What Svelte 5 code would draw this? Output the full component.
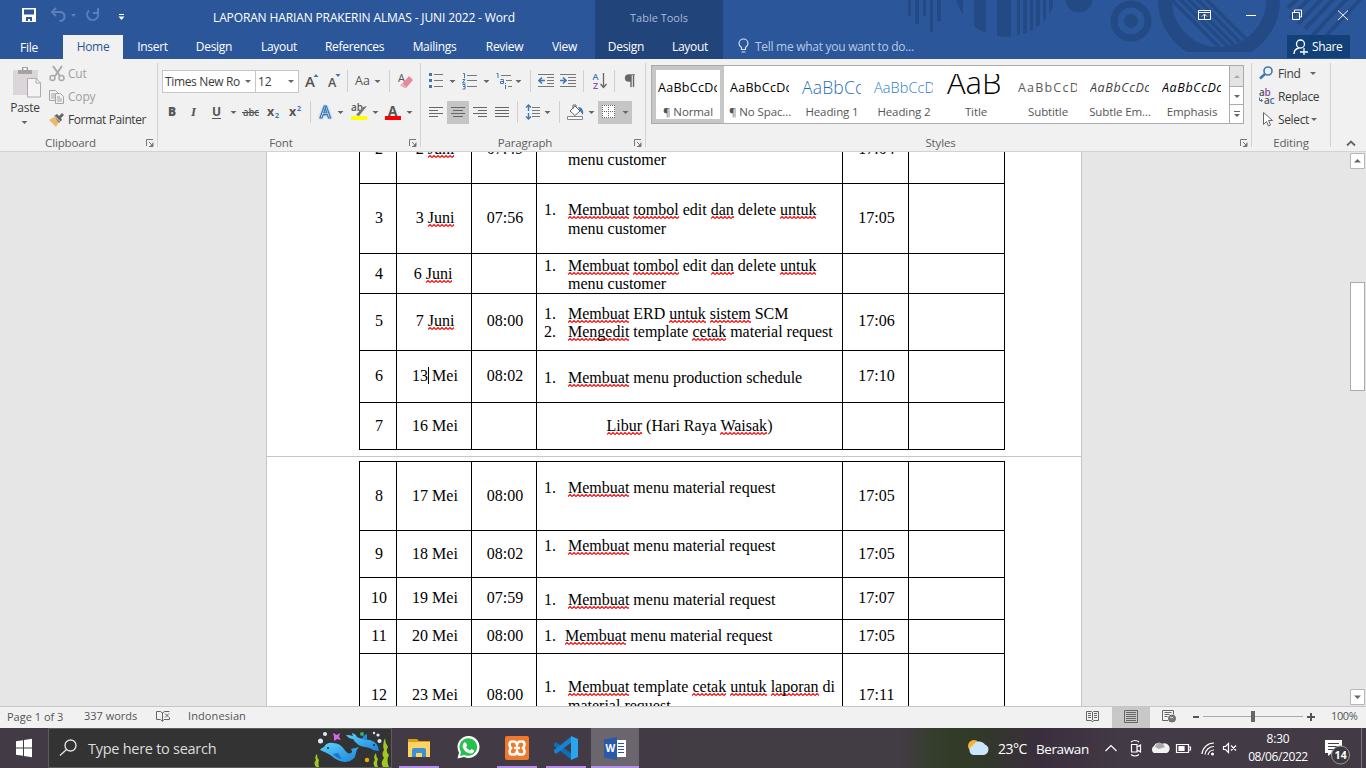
<script>
  const rows1 = [
    { h: 32, no: '2', date: '2 ~Juni~', t: '07:49', out: '17:04', mid: -3, lines: ['menu customer'], top: -1, cont: true },
    { h: 70, no: '3', date: '3 ~Juni~', t: '07:56', out: '17:05', mid: 34, lines: ['~Membuat~ ~tombol~ edit ~dan~ delete ~untuk~', 'menu customer'], top: 16, lead: 19 },
    { h: 40, no: '4', date: '6 ~Juni~', t: '', out: '', mid: 20, shift: true, lines: ['~Membuat~ ~tombol~ edit ~dan~ delete ~untuk~', 'menu customer'], top: 3 },
    { h: 57, no: '5', date: '7 ~Juni~', t: '08:00', out: '17:06', mid: 27, lines: ['~Membuat~ ERD ~untuk~ ~sistem~ SCM', '~Mengedit~ template ~cetak~ material request'], top: 11, multi: true },
    { h: 52, no: '6', date: '13| Mei', t: '08:02', out: '17:10', mid: 25, lines: ['~Membuat~ menu production schedule'], top: 18 },
    { h: 47, no: '7', date: '16 Mei', t: '', out: '', mid: 23, lines: ['~Libur~ (Hari Raya ~Waisak~)'], top: 14, holiday: true }
  ];
  const rows2 = [
    { h: 69, no: '8', date: '17 Mei', t: '08:00', out: '17:05', mid: 34, lines: ['~Membuat~ menu material request'], top: 17 },
    { h: 47, no: '9', date: '18 Mei', t: '08:02', out: '17:05', mid: 23, lines: ['~Membuat~ menu material request'], top: 6 },
    { h: 42, no: '10', date: '19 Mei', t: '07:59', out: '17:07', mid: 20, lines: ['~Membuat~ menu material request'], top: 13 },
    { h: 34, no: '11', date: '20 Mei', t: '08:00', out: '17:05', mid: 16, lines: ['~Membuat~ menu material request'], top: 7, tight: true },
    { h: 70, no: '12', date: '23 Mei', t: '08:00', out: '17:11', mid: 41, lines: ['~Membuat~ template ~cetak~ ~untuk~ ~laporan~ di', 'material request'], top: 23, lead: 19 }
  ];
  const tabs = [['Insert', 59], ['Design', 64], ['Layout', 66], ['References', 85], ['Mailings', 75], ['Review', 65], ['View', 55]];
  const styles = [
    ['AaBbCcDc', '¶ Normal', 'plain'], ['AaBbCcDc', '¶ No Spac...', 'plain'], ['AaBbCc', 'Heading 1', 'h1s'], ['AaBbCcD', 'Heading 2', 'h2s'],
    ['AaB', 'Title', 'title'], ['AaBbCcD', 'Subtitle', 'sub'], ['AaBbCcDc', 'Subtle Em...', 'subem'], ['AaBbCcDc', 'Emphasis', 'em']
  ];
  const parts = (s) => s.split('~').map((text, i) => ({ text, bad: i % 2 === 1 }));
</script>

{#snippet arrow(x, y)}<path d="M{x - 3} {y - 1}h6l-3 3z" fill="#666" />{/snippet}
{#snippet marked(s)}{#each parts(s) as p}{#if p.bad}<span class="bad">{p.text}</span>{:else if p.text.includes('|')}{p.text.split('|')[0]}<span class="caret"></span>{p.text.split('|')[1]}{:else}{p.text}{/if}{/each}{/snippet}
{#snippet launcher()}<svg width="16" height="16" viewBox="0 0 16 16"><path d="M5.500 11V4.500H12M8 7l3 3M12 7.500v4H8" fill="none" stroke="#777" /><path d="M12 8v4H8z" fill="#777" /></svg>{/snippet}
{#snippet row(r)}
  <div class="row" style:height="{r.h}px">
    <div class="c" style:padding-top="{Math.max(0, r.mid - 9)}px" style:margin-top="{Math.min(0, r.mid - 9)}px">{r.no}</div>
    <div class="c" style:padding-top="{Math.max(0, r.mid - 9)}px" style:margin-top="{Math.min(0, r.mid - 9)}px" style:padding-right="{r.shift ? 4 : 0}px">{@render marked(r.date)}</div>
    <div class="c" style:padding-top="{Math.max(0, r.mid - 9)}px" style:margin-top="{Math.min(0, r.mid - 9)}px">{r.t}</div>
    <div class="d" class:holiday={r.holiday} class:tight={r.tight} style:padding-top="{Math.max(0, r.top)}px" style:margin-top="{Math.min(0, r.top)}px" style:line-height="{r.lead ?? 18.4}px">
      {#each r.lines as l, i}
        <div class="line"><span>{#if !r.holiday && !r.cont && (i === 0 || r.multi)}{i + 1}.{/if}</span><span>{@render marked(l)}</span></div>
      {/each}
    </div>
    <div class="c" style:padding-top="{Math.max(0, r.mid - 9)}px" style:margin-top="{Math.min(0, r.mid - 9)}px">{r.out}</div>
    <div class="c last"></div>
  </div>
{/snippet}

<div class="app">
  <header>
    <svg class="art" width="466" height="59" viewBox="900 0 466 59" fill="#234a85">
      <clipPath id="disk"><circle cx="1006" cy="-15" r="52" /></clipPath>
      <clipPath id="ring"><circle cx="1219" cy="0" r="47" /></clipPath>
      <clipPath id="flat"><rect x="1150" y="0" width="140" height="52" /></clipPath>
      <path d="M908 0h3v16h-3zM915 0h4v24h-4zM923 0h3v16h-3zM930 0h3v32h-3zM937 0h4v21h-4z" />
      <path clip-path="url(#disk)" d="M954 0h9v40h-9zM974 0h12v40h-12zM997 0h14v40h-14zM1017 0h3v40h-3zM1023 0h4v40h-4zM1030 0h3v40h-3zM1036 0h4v40h-4zM1043 0h3v40h-3zM1049 0h4v40h-4zM1055 0h3v40h-3z" />
      <circle cx="1079" cy="-1" r="13.500" />
      <circle cx="1131" cy="21" r="17" fill="none" stroke="#234a85" stroke-width="7" />
      <circle cx="1131" cy="21" r="7" />
      <circle clip-path="url(#flat)" cx="1219" cy="0" r="54" fill="none" stroke="#234a85" stroke-width="14" />
      <g clip-path="url(#ring)" stroke="#234a85" stroke-width="3.500"><path d="M1160-12l75 75M1168-13l75 75M1177-12l75 75M1186-12l75 75M1195-12l75 75" /></g>
      <g stroke="#234a85" stroke-width="4"><path d="M1306-10l-18 18M1318-10l-28 28M1330-10l-32 34M1342-10l-37 39M1355-10l-43 46M1367-8l-52 56" /></g>
    </svg>
    <div class="titlebar">
      <svg width="213" height="35" viewBox="0 0 213 35" fill="none" stroke="#fff">
        <path d="M22 8h14v14H22z" fill="#fff" stroke="none" /><path d="M24 9.500h10v5H24zM26 17h6v4h-2v-2h-2v2h-2z" fill="#2b579a" stroke="none" />
        <path d="M56 8l-4 4 4 4M52.500 12h7q5 0 5 4.500t-5 4.500" stroke="#5b7fb8" stroke-width="2" /><path d="M71 14h5l-2.500 3z" fill="#5b7fb8" stroke="none" />
        <path d="M89 10.500A5.500 5.500 0 1 0 97.500 12M98 8v5h-5" stroke="#5b7fb8" stroke-width="2" />
        <path d="M119 14.500h5" /><path d="M118.500 16.500h6l-3 3.500z" fill="#fff" stroke="none" />
      </svg>
      <span class="doc">LAPORAN HARIAN PRAKERIN ALMAS - JUNI 2022 - Word</span>
      <span class="ctx">Table Tools</span>
      <svg class="win" width="176" height="35" viewBox="1190 0 176 35" fill="none" stroke="#fff"><path d="M1198.500 10.500h12v9h-12zM1198.500 12.500h12M1204.500 19v-5M1202 16.500l2.500-2.500 2.500 2.500M1246 15.500h10M1292.500 12.500h7v7h-7zM1294.500 12v-2h7v7h-2M1338 10.500l10 9.500M1348 10.500L1338 20" /></svg>
    </div>
    <nav>
      <span class="tab file">File</span><span class="tab home">Home</span>
      {#each tabs as [t, w]}<span class="tab" style:width="{w}px">{t}</span>{/each}
      <div class="tools"><span class="tab">Design</span><span class="tab">Layout</span></div>
      <svg width="32" height="24" viewBox="723 35 32 24" fill="none" stroke="#d5dfee" stroke-width="1.200"><path d="M741.500 49.500v-2q-2.500-2-2.500-4a4.500 4.500 0 0 1 9 0q0 2-2.500 4v2zM741.500 52h4" /></svg>
      <span class="tell">Tell me what you want to do...</span>
      <span class="share"><svg width="18" height="18" viewBox="0 0 18 18" fill="none" stroke="#fff" stroke-width="1.300"><circle cx="8.500" cy="6" r="4" /><path d="M2 16q0-5 5-6M8 14h8M12 10v7" /></svg>Share</span>
    </nav>
  </header>

  <section class="ribbon">
    <div class="group" style:width="157px">
      <div class="body">
        <div class="paste">
          <svg width="48" height="40" viewBox="0 60 48 40"><path d="M13 70h25v25H13z" fill="#dad6da" /><path d="M18 70h14v4H18zM22 67h6v4h-6z" fill="#a3a3a3" /><rect x="23.500" y="68" width="3" height="2" fill="#fff" /><path d="M27.500 78.500h8.500l4.500 4.500v14h-13z" fill="#f4f4f4" stroke="#b0a9b3" /><path d="M36 78v5h5" fill="none" stroke="#b0a9b3" /></svg>
          <span>Paste</span>
          <svg width="48" height="12" viewBox="0 0 48 12">{@render arrow(24.5, 6)}</svg>
        </div>
        <div class="list">
          <div class="dim"><svg width="20" height="18" viewBox="0 0 20 18" fill="none" stroke="#aaa" stroke-width="1.500"><path d="M5 1l7 10M14 1L7 11" stroke-width="2" /><circle cx="4.500" cy="13" r="2.500" /><circle cx="13.500" cy="13" r="2.500" /></svg>Cut</div>
          <div class="dim"><svg width="20" height="18" viewBox="0 0 20 18" fill="#f1f1f1" stroke="#a5a5a5"><path d="M1.500 2.500h6l2 2v8h-8zM3 6h4M3 8h4M3 10h4" /><path d="M7.500 5.500h5l3 3v7h-8zM9 9h3M9 11h5M9 13h5" /></svg>Copy</div>
          <div class="fp"><svg width="20" height="18" viewBox="0 0 20 18"><path d="M1 9l5-3 5 5-3 5z" fill="#edb868" /><path d="M6 5l3-2 2 2 3-3 2 2-3 3 1 2-3 3z" fill="#666" /><path d="M6.500 5l6 6" stroke="#f1f1f1" /></svg>Format Painter</div>
        </div>
      </div>
      <div class="label"><span>Clipboard</span>{@render launcher()}</div>
    </div>
    <i class="sep"></i>
    <div class="group" style:width="262px">
      <div class="rows">
        <div class="r1">
          <span class="combo fontname">Times New Ro<svg width="9" height="6" viewBox="0 0 9 6">{@render arrow(4, 2)}</svg></span><span class="combo size">12<svg width="9" height="6" viewBox="0 0 9 6">{@render arrow(4, 2)}</svg></span>
          <svg class="ic" width="117" height="26" viewBox="299 68 117 26"><text x="305" y="87" font-size="15" font-weight="600">A</text><path d="M313.500 77h5l-2.500-3z" fill="#3d77b4" /><text x="328" y="87" font-size="12.500" font-weight="600">A</text><path d="M335.500 74h5l-2.500 3z" fill="#3d77b4" /><path d="M347.500 70v22M389.500 70v22" stroke="#d0d0d0" /><text x="355" y="85" font-size="12.500" font-weight="500">Aa</text>{@render arrow(377.5, 81)}<text x="398" y="82" font-size="11">A</text><path d="M402 84l7-8 4 4-7 8z" fill="#e8879a" /><path d="M400 85l3-2 3 4-2 1z" fill="#efabb8" /></svg>
        </div>
        <svg class="ic" width="258" height="26" viewBox="158 99 258 26">
          <text x="168" y="116" font-size="12" font-weight="800">B</text><text x="191" y="116" font-size="13" font-weight="700" font-style="italic" font-family="Liberation Serif">I</text><text x="212" y="116" font-size="12" font-weight="700">U</text><path d="M212 118.500h9" stroke="#555" />{@render arrow(233.5, 112)}
          <text x="243" y="116" font-size="10.500" font-weight="600" textLength="16" lengthAdjust="spacingAndGlyphs">abc</text><path d="M242 112.500h17" stroke="#555" />
          <text x="267" y="116" font-size="12.500" font-weight="700">x</text><text x="275" y="118" font-size="7" style:fill="#3d77b4" font-weight="700">2</text><text x="289" y="116" font-size="12.500" font-weight="700">x</text><text x="297" y="111" font-size="7" style:fill="#3d77b4" font-weight="700">2</text>
          <path d="M310.500 101v22" stroke="#d0d0d0" />
          <text class="glow" x="320" y="117.500" font-size="16" font-weight="600">A</text>{@render arrow(340.5, 112)}
          <text x="351" y="111" font-size="10" font-weight="600">ab</text><path d="M356 115l7-8 4-1-8 10z" fill="#777" /><path d="M351 116h16v4h-16z" fill="#ff0" />{@render arrow(375.5, 112)}
          <text x="388" y="115.500" font-size="13.500" font-weight="700">A</text><path d="M385 116h16v4h-16z" fill="red" />{@render arrow(409.5, 112)}
        </svg>
      </div>
      <div class="label"><span>Font</span>{@render launcher()}</div>
    </div>
    <i class="sep"></i>
    <div class="group" style:width="224px">
      <div class="rows">
        <svg class="ic" width="224" height="26" viewBox="421 68 224 26">
          <path d="M434 74.500h9M434 80.500h9M434 86.500h9M467 75.500h10M467 80.500h10M467 86.500h10M501 75.500h10M506 80.500h6M508 86.500h4" stroke="#777" /><path d="M429 73h3v3h-3zM429 79h3v3h-3zM429 85h3v3h-3z" fill="#3d77b4" />
          <path d="M463 73.500h1.500v4.500M462.500 79.500h2.500l-2.500 3.500h3M462.500 84.500h2.500v4.500h-2.500M463 86.500h2M496.500 73.500h1.500v4.500M500.500 79.500h3v4h-3v-2h3M505.500 85v4M505.500 83v1" fill="none" stroke="#3d77b4" />
          {@render arrow(452.5, 81)}{@render arrow(486.5, 81)}{@render arrow(518.5, 81)}
          <path d="M530.500 70v22M583.500 70v22M614.500 70v22" stroke="#d0d0d0" />
          <path d="M538 74.500h16M547 77.500h7M547 80.500h7M547 83.500h7M538 86.500h16M560 74.500h16M568 77.500h8M568 80.500h8M568 83.500h8M560 86.500h16" stroke="#777" />
          <path d="M545 80.500h-6M542 77.500l-3 3 3 3M560 80.500h6M563 77.500l3 3-3 3" fill="none" stroke="#3d77b4" stroke-width="1.700" />
          <text x="592.500" y="79.500" font-size="9" font-weight="600" style:fill="#3d77b4">A</text><text x="593" y="88.500" font-size="9" font-weight="600" style:fill="#8c50a8">Z</text><path d="M603.500 73v14M600.500 84l3 3.500 3-3.500" fill="none" stroke="#666" stroke-width="1.300" />
          <path d="M634.500 74.500h-6a3.500 3.500 0 0 0 0 7h2v5.500h1v-12h1.500v12h1v-12h1z" fill="#666" stroke="#666" stroke-width=".4" />
        </svg>
        <svg class="ic" width="224" height="26" viewBox="421 99 224 26">
          <path d="M447 101h22v23h-22zM598 101h34v23h-34z" fill="#c5c5c5" />
          <path d="M429 107.500h14M429 110.500h9M429 113.500h14M429 116.500h9M451 107.500h14M453 110.500h10M451 113.500h14M453 116.500h10M473 107.500h14M478 110.500h9M473 113.500h14M478 116.500h9M495 107.500h14M495 110.500h14M495 113.500h14M495 116.500h14" stroke="#666" />
          <path d="M517.500 101v22M559.500 101v22" stroke="#d0d0d0" />
          <path d="M532 107.500h8M532 110.500h8M532 113.500h8M532 116.500h8" stroke="#777" /><path d="M528.500 105v6M526 107.500l2.500-2.500 2.500 2.500M528.500 113v6M526 116.500l2.500 2.500 2.500-2.500" fill="none" stroke="#3d77b4" stroke-width="1.400" />{@render arrow(547.5, 112)}
          <path d="M570 111l5-5 5 5-5 4.500zM573 109v-4h3v2" fill="#fff" stroke="#666" /><path d="M578 107q6 0 5 8l-3-4z" fill="#3d77b4" /><path d="M567.500 116.500h15v3h-15z" fill="#fff" stroke="#888" />{@render arrow(591.5, 112)}
          <path d="M602 105h13v13h-13z" fill="#fff" /><path d="M602 105.500h13M602 111.500h13M602.500 105v13M608.500 105v13M614.500 105v13M602 117.500h13" stroke="#666" stroke-dasharray="1 1" />{@render arrow(625.5, 112)}
        </svg>
      </div>
      <div class="label"><span>Paragraph</span>{@render launcher()}</div>
    </div>
    <i class="sep"></i>
    <div class="group" style:width="605px">
      <div class="gallery">
        {#each styles as [sample, name, cls], i}
          <div class="style" class:sel={i === 0}><div class="sample {cls}"><span>{sample}</span></div><div class="sname">{name}</div></div>
        {/each}
        <div class="scroll"><i class="off"><svg width="13" height="20" viewBox="0 0 13 20"><path d="M4 12h6l-3-3z" fill="#aaa" /></svg></i><i><svg width="13" height="18" viewBox="0 0 13 18">{@render arrow(7, 9)}</svg></i><i><svg width="13" height="18" viewBox="0 0 13 18"><path d="M4 6.500h6" stroke="#666" />{@render arrow(7, 10)}</svg></i></div>
      </div>
      <div class="label"><span>Styles</span>{@render launcher()}</div>
    </div>
    <i class="sep"></i>
    <div class="group" style:width="78px">
      <div class="list edit">
        <div><svg width="20" height="18" viewBox="0 0 20 18" fill="none" stroke="#3d77b4" stroke-width="1.600"><circle cx="10" cy="6" r="4" /><path d="M7 9l-5 4.500" stroke-width="2.500" /></svg>Find<svg width="20" height="12" viewBox="0 0 20 12">{@render arrow(12, 5)}</svg></div>
        <div><svg class="ic" width="20" height="18" viewBox="0 0 20 18" font-size="10" font-weight="600"><text x="1" y="8">a</text><text x="6.500" y="8" style:fill="#8c50a8">b</text><text x="6" y="15.500">a</text><text x="11.500" y="15.500" style:fill="#3d77b4">c</text><path d="M1.500 9.500v3h3M3 11l1.500 1.500L3 14" fill="none" stroke="#3d77b4" /></svg>Replace</div>
        <div><svg width="20" height="18" viewBox="0 0 20 18"><path d="M5.500 1.500v12l3-3 2 4.500 2-1-2-4.500h4z" fill="#fff" stroke="#666" /></svg>Select<svg width="10" height="12" viewBox="0 0 10 12">{@render arrow(5, 5)}</svg></div>
      </div>
      <div class="label"><span>Editing</span></div>
    </div>
    <i class="sep"></i>
    <svg class="collapse" width="35" height="16" viewBox="0 0 35 16"><path d="M16 10.500l4-4 4 4" fill="none" stroke="#666" stroke-width="1.800" /></svg>
  </section>

  <main>
    <div class="page">
      <div class="table">{#each rows1 as r}{@render row(r)}{/each}</div>
      <div class="break"></div>
      <div class="table second">{#each rows2 as r}{@render row(r)}{/each}</div>
    </div>
    <div class="vscroll">
      <svg width="15" height="16" viewBox="0 0 15 16"><path d="M.5.500h14v15H.500z" fill="#fff" stroke="#b8b8b8" /><path d="M4 9.500h7L7.500 6z" fill="#666" /></svg>
      <div class="thumb"></div>
      <svg width="15" height="16" viewBox="0 0 15 16"><path d="M.5.500h14v15H.500z" fill="#fff" stroke="#b8b8b8" /><path d="M4 6.500h7L7.500 10z" fill="#666" /></svg>
    </div>
  </main>

  <div class="status">
    <span class="pg">Page 1 of 3</span><span class="wd">337 words</span>
    <svg width="38" height="21" viewBox="150 707 38 21" fill="none" stroke="#666"><path d="M156.500 711.500h4l2 1.500 2-1.500h5M156.500 711.500v8h4l2 2v-9M162.500 721l1.500-1.500h5.500v-2M165 713.500l4 4M169 713.500l-4 4" /></svg>
    <span class="lang">Indonesian</span>
    <svg class="views" width="246" height="21" viewBox="1080 707 246 21" fill="none" stroke="#666">
      <path d="M1112 707h38v21h-38z" fill="#c8c8c8" stroke="none" />
      <path d="M1086.500 711.500h5l1 1 1-1h5v9h-5l-1 1.500-1-1.500h-5zM1092.500 712v8M1088 713.500h3M1088 715.500h3M1088 717.500h3M1094 713.500h3M1094 715.500h3M1094 717.500h3" />
      <path d="M1124.500 710.500h13v12h-13zM1126 712.500h10M1126 714.500h10M1126 716.500h10M1126 718.500h10M1126 720.500h10" />
      <path d="M1168 720.500h-5.500v-10h11v4M1164.500 712.500h7M1164.500 714.500h5M1164.500 716.500h3" /><circle cx="1172" cy="718.500" r="3.500" fill="#777" /><path d="M1170 717l2 1 1-1" stroke="#ddd" />
      <path d="M1193 717h6M1307 717h8M1311 713v8" stroke="#555" stroke-width="2" /><path d="M1203 716.500h100" stroke="#aaa" /><path d="M1251 711h4v11h-4z" fill="#666" stroke="none" />
    </svg>
    <span class="zoom">100%</span>
  </div>

  <footer>
    <svg width="48" height="40" viewBox="0 0 48 40" fill="#fff"><path d="M16 13.200l7-1v7.300h-7zM24 12l8-1.200v8.700h-8zM16 20.500h7v7.300l-7-1zM24 20.500h8v8.700L24 28z" /></svg>
    <div class="search">
      <svg width="39" height="38" viewBox="49 729 39 38" fill="none" stroke="#ddd" stroke-width="1.400"><circle cx="70.500" cy="745.500" r="5.500" /><path d="M66.500 749.500l-6.500 6" /></svg>
      <span>Type here to search</span>
      <svg class="sea" width="78" height="38" viewBox="313 729 78 38">
        <defs><linearGradient id="dol" x1="0" y1="0" x2="1" y2="1"><stop offset="0" stop-color="#5cd3ff" /><stop offset="1" stop-color="#1b82d8" /></linearGradient></defs>
        <path d="M320 750q1-2 4-3 3-5 9-4 7 0 11 6 4 6 7 4 2-1 0-4l8-2q-3 3-3 6-1 8-10 9-6 0-12-4-4-4-14-8z" fill="url(#dol)" /><path d="M333 754l5-1 4 6q-6-1-9-5z" fill="#1c74c4" /><circle cx="328" cy="748" r="1" fill="#123" />
        <path d="M379 751q-1-9-9-11-9-1-13-3-1-3-5-4 0 1 1 3-3-1-7-1 3 4 7 4 4 7 12 8 6 1 8 3 3 1 6 1z" fill="url(#dol)" /><path d="M362 739q1-4 5-5v6z" fill="#2489da" /><circle cx="374" cy="745" r="1" fill="#123" />
        <g fill="#dcecff"><circle cx="320.500" cy="741" r="2.500" /><circle cx="325" cy="734" r="2" /><circle cx="374" cy="733" r="1.200" /><circle cx="378" cy="735" r="1.600" /><circle cx="379.500" cy="741" r="2" /></g>
        <path d="M333 733l4 2 3-2-1 4 2 3-4-1-3 2v-4z" fill="#d966ea" /><circle cx="362" cy="734" r="2" fill="#29b765" /><circle cx="367" cy="760" r="2.200" fill="#f5a30a" />
        <path d="M316 767q-3-4 0-7-2-3 1-6 0 4 2 6-1 3 0 7zM375 767q-3-4 0-7-2-4 1-7 0 4 2 6-2 4 0 8zM383 767q-3-5 1-9-3-4 0-8-2-5 1-12 0 5 3 9-3 4 1 8-3 5 0 12z" fill="#a0c820" />
      </svg>
    </div>
    <div class="tasks">
      <div class="task on"><svg width="24" height="24" viewBox="0 0 24 24"><path d="M1 3h9l2 2h11v4H1z" fill="#dc9d13" /><path d="M1 6h22v15H1z" fill="#ffd463" /><path d="M5 14q0-2 2-2h10q2 0 2 2v7h-4v-4H9v4H5z" fill="#3b91d6" /></svg></div>
      <div class="task"><svg width="24" height="24" viewBox="0 0 24 24"><path d="M1.500 22.500l1.500-6A11 11 0 1 1 8 21z" fill="#fff" /><path d="M4 20l1-4a8.800 8.800 0 1 1 3.500 3z" fill="#25c04e" /><path d="M8 6.500q2-1 3 2.500 0 1-1 2 1.500 2.500 4 3.500l1.500-1.500 2.500 1.200q0 3-3 3.300-6-.5-8.500-6.500Q6.500 8 8 6.500z" fill="#fff" /></svg></div>
      <div class="task on"><svg width="26" height="26" viewBox="0 0 26 26"><rect x="1" y="1" width="24" height="24" rx="2" fill="#f0782a" /><path d="M8 6.500h2q2 0 3 3 1-3 3-3h2q2.500 0 2.500 3 0 2-1.500 3.500 1.500 1.500 1.500 3.500 0 3-2.500 3h-2q-2 0-3-3-1 3-3 3H8q-2.500 0-2.500-3Q5.500 14.500 7 13q-1.500-1.500-1.500-3.500 0-3 2.500-3zM10 13h6" fill="none" stroke="#fff" stroke-width="2.600" /></svg></div>
      <div class="task on"><svg width="26" height="26" viewBox="0 0 26 26"><path d="M1 9l2-2 16 12v6L1 11z" fill="#0b70b8" /><path d="M1 17l2 2L19 7V1L1 15z" fill="#1583cf" /><path d="M18 1l7 3v18l-7 3z" fill="#29a5ef" /></svg></div>
      <div class="task active on"><svg width="24" height="24" viewBox="0 0 24 24"><path d="M12 4h11v17H12z" fill="#fff" /><path d="M15 7.500h6M15 10.500h6M15 13.500h6M15 16.500h6" stroke="#2b579a" /><path d="M1 3.500L14 1v23L1 21.500z" fill="#2a5aa7" /><text x="2.500" y="16" font-size="10" font-weight="700" fill="#fff" font-family="Open Sans">W</text></svg></div>
    </div>
    <svg class="weather" width="30" height="40" viewBox="965 728 30 40"><circle cx="974" cy="746" r="6" fill="#f9b233" /><path d="M973 755a5 5 0 0 1 0-9.500 7 7 0 0 1 12-1 5.500 5.500 0 0 1-1 10.500z" fill="#c9e6fa" /></svg>
    <span class="temp">23°C</span><span class="cond">Berawan</span>
    <svg width="148" height="40" viewBox="1095 728 148 40" fill="none" stroke="#fff" stroke-width="1.200">
      <path d="M1105.500 751l5.500-5.500 5.500 5.500" /><path d="M1131.500 744.500h5.500v7.500h-5.500zM1137 747l3.500-2v7l-3.500-2M1131 742q4-3 8 0M1131 754.500q4 3 8 0" />
      <path d="M1154 753a4 4 0 0 1 0-7 5 5 0 0 1 8-2 5 5 0 0 1 5 9z" fill="#f3f3f3" stroke="none" /><path d="M1155 747q2-5 6-4 3 1 4 4l-6 2z" fill="#aaa" stroke="none" />
      <path d="M1176.500 744.500h12v8h-12zM1189 747h1.500v3h-1.500" /><path d="M1179 746.500h5v4h-5z" fill="#fff" />
      <path d="M1202 754a12 12 0 0 1 12-11M1205 754.500a9 9 0 0 1 9-8M1208 755a6 6 0 0 1 6-5" /><circle cx="1212.500" cy="754" r="1.500" fill="#fff" stroke="none" />
      <path d="M1223.500 746.500h2l3-3v9l-3-3h-2zM1231 745.500l5 5M1236 745.500l-5 5" />
    </svg>
    <div class="clock"><span>8:30</span><span class="dt">08/06/2022</span></div>
    <svg width="53" height="40" viewBox="1313 728 53 40"><path d="M1325 740h17v13h-10l-4 3v-3h-3z" fill="#fff" /><path d="M1328 743.500h11M1328 746.500h11M1328 749.500h7" stroke="#443d47" /><circle cx="1340.500" cy="755" r="9" fill="#3c3a3e" stroke="#999" /><text x="1334.500" y="759" font-family="Open Sans" font-size="10.500" font-weight="700" fill="#fff" textLength="12">14</text><path d="M1361.500 728v40" stroke="#777" /></svg>
  </footer>
</div>

<style>
  :global(body) { margin: 0; overflow: hidden; }
  .app { width: 1366px; height: 768px; display: flex; flex-direction: column; overflow: hidden; font: 12px/16px 'Open Sans', 'Noto Sans', sans-serif; letter-spacing: -0.2px; color: #3c3c3c; }
  svg { display: block; flex: none; }
  header { height: 59px; background: #2b579a; color: #fff; position: relative; flex: none; }
  .art { position: absolute; right: 0; top: 0; }
  .titlebar { display: flex; height: 35px; position: relative; }
  .doc { width: 382px; line-height: 35px; white-space: nowrap; letter-spacing: -0.13px; }
  .ctx { width: 128px; background: #21447a; color: #a9bbd8; line-height: 36px; text-align: center; font-size: 11px; letter-spacing: 0; }
  .win { margin-left: auto; }
  nav { display: flex; height: 24px; line-height: 24px; position: relative; }
  .tab { text-align: center; letter-spacing: -0.3px; }
  .file { width: 58px; margin-right: 5px; line-height: 25px; }
  .home { width: 60px; background: #f1f1f1; color: #2b579a; }
  .tools { display: grid; grid-template-columns: 62px 66px; width: 128px; margin-left: 3px; background: #21447a; }
  .tell { color: #b9c9e2; letter-spacing: -0.28px; }
  .share { display: flex; align-items: center; gap: 2px; background: #124078; width: 58px; height: 23px; padding-left: 5px; margin: 0 16px 0 auto; letter-spacing: -0.4px; }

  .ribbon { height: 92px; background: #f1f1f1; border-bottom: 1px solid #d2d2d2; display: flex; flex: none; }
  .group { display: flex; flex-direction: column; }
  .sep { width: 1px; height: 84px; margin-top: 4px; background: #d2d2d2; }
  .body { height: 76px; display: flex; }
  .rows { height: 67px; padding-top: 9px; display: flex; flex-direction: column; gap: 5px; }
  .r1 { display: flex; }
  .label { display: flex; height: 16px; line-height: 16px; color: #606060; font-size: 11.500px; }
  .label span { flex: 1; text-align: center; letter-spacing: -0.15px; }
  .paste { width: 48px; display: flex; flex-direction: column; padding-top: 1px; text-align: center; }
  .paste span { line-height: 16px; padding-left: 2px; }
  .list { padding-top: 3px; display: flex; flex-direction: column; height: 73px; }
  .list > div { display: flex; align-items: center; height: 23px; white-space: nowrap; }
  .list > .dim { color: #a0a0a0; }
  .list > .fp { letter-spacing: -0.4px; }
  .edit { padding-left: 6px; }
  .list.edit > div { letter-spacing: -0.35px; }
  .combo { box-sizing: border-box; height: 23px; border: 1px solid #c6c6c6; background: #fff; margin-top: 2px; display: flex; align-items: center; justify-content: space-between; padding: 0 2px; white-space: nowrap; }
  .fontname { margin-left: 4px; width: 94px; letter-spacing: -0.35px; }
  .size { width: 43px; border-left: 0; }
  .ic { font-family: 'Open Sans', sans-serif; letter-spacing: 0; }
  .ic text { fill: #555; }
  .ic .glow { fill: #fff; stroke: #3d77b4; stroke-width: 1.2px; filter: drop-shadow(0 0 1px #7eb0e6); }
  .gallery { margin: 6px 0 11px 5px; height: 59px; width: 593px; box-sizing: border-box; border: 1px solid #ababab; background: #fff; display: flex; }
  .style { width: 72px; display: flex; flex-direction: column; box-sizing: border-box; padding: 8px 0 0 6px; flex: none; height: 57px; }
  .sel { box-shadow: inset 0 0 0 4px #c6c6c6; }
  .sample { width: 59px; height: 30px; overflow: hidden; white-space: nowrap; line-height: 27px; color: #000; font-size: 12.500px; letter-spacing: 0.3px; }
  .h1s { font-size: 17.500px; font-weight: 300; color: #1f6fb8; letter-spacing: 0.2px; }
  .h2s { font-size: 14.500px; font-weight: 300; color: #1f7cc8; letter-spacing: 0.1px; }
  .title { font-size: 31px; font-weight: 300; line-height: 16px; letter-spacing: 0; padding-left: 1px; width: 58px; }
  .sub { color: #5a5a5a; letter-spacing: 1.2px; }
  .subem { font-style: italic; color: #404040; letter-spacing: 0.6px; }
  .em { font-style: italic; letter-spacing: 0.6px; }
  .sname { width: 60px; text-align: center; line-height: 16px; white-space: nowrap; display: flex; justify-content: center; letter-spacing: -0.1px; font-size: 11.500px; color: #555; }
  .scroll { margin-left: auto; border-left: 1px solid #ababab; width: 13px; display: grid; grid-template-rows: 21px 18px 18px; }
  .scroll i { border-bottom: 1px solid #ababab; box-sizing: border-box; overflow: hidden; }
  .scroll i:last-child { border: 0; }
  .off { background: #e3e3e3; }
  .collapse { margin-top: 76px; }

  main { height: 554px; background: #e6e6e6; display: flex; flex: none; overflow: hidden; }
  .page { margin-left: 266px; width: 814px; border: solid #c6c6c6; border-width: 0 1px; background: #fff; font: 16px/18.400px 'Liberation Serif', serif; letter-spacing: 0; color: #000; height: 554px; overflow: hidden; }
  .table { margin-left: 92px; width: 646px; }
  .break { height: 6px; border-bottom: 1px solid #c6c6c6; margin-bottom: 4px; }
  .second { border-top: 1px solid #000; }
  .row { display: grid; grid-template-columns: 37px 75px 65px 306px 66px 97px; box-sizing: border-box; border-bottom: 1px solid #000; overflow: hidden; }
  .c, .d { border-left: 1px solid #000; box-sizing: border-box; white-space: nowrap; }
  .c { text-align: center; padding-left: 2px; }
  .last { border-right: 1px solid #000; }
  .line { display: grid; grid-template-columns: 24px 1fr; padding-left: 7px; }
  .tight .line { grid-template-columns: 21px 1fr; }
  .holiday .line { display: block; text-align: center; padding: 0; }
  .bad { background: url("data:image/svg+xml,%3Csvg xmlns='http://www.w3.org/2000/svg' width='4' height='3'%3E%3Cpath d='M0 2.500L2 .5L4 2.500' fill='none' stroke='red' stroke-width='1.100'/%3E%3C/svg%3E") repeat-x 0 100%; padding-bottom: 1px; }
  .caret { display: inline-block; width: 1px; height: 17px; background: #000; vertical-align: -3px; margin-right: -1px; }
  .vscroll { margin-left: auto; width: 16px; display: flex; flex-direction: column; padding: 1px 0; box-sizing: border-box; }
  .thumb { width: 13px; height: 107px; border: 1px solid #ababab; background: #fff; margin: 113px 0 298px; }

  .status { height: 21px; border-top: 1px solid #c6c6c6; background: #f1f1f1; display: flex; line-height: 18px; font-size: 11px; color: #555; letter-spacing: 0; white-space: nowrap; flex: none; }
  .pg { width: 77px; padding-left: 7px; line-height: 20px; }
  .wd { width: 66px; }
  .lang { letter-spacing: 0.1px; }
  .views { margin-left: auto; }
  .zoom { width: 35px; padding-left: 5px; letter-spacing: -0.4px; }

  footer { height: 40px; display: flex; color: #fff; background: linear-gradient(90deg, #423a45 0, #423c45 900px, #353d2c 935px, #303a26 970px, #3a2e3d 1040px, #423a45 1120px); flex: none; }
  .search { width: 342px; height: 38px; border: 1px solid #5c5c5c; background: #333; display: flex; color: #ddd; font-size: 14.500px; line-height: 39px; letter-spacing: -0.27px; }
  .sea { margin-left: auto; }
  .tasks { display: flex; gap: 1px; padding-left: 3px; }
  .task { width: 48px; height: 40px; box-sizing: border-box; display: flex; align-items: center; justify-content: center; }
  .on { background: linear-gradient(#b48fe6, #b48fe6) 50% 100% / 40px 2px no-repeat; }
  .active { background: linear-gradient(#b48fe6, #b48fe6) 50% 100% / 48px 2px no-repeat #6b666e; }
  .weather { margin-left: auto; }
  .temp { width: 41px; padding-left: 3px; font-size: 14px; line-height: 42px; letter-spacing: -0.5px; box-sizing: border-box; }
  .cond { width: 59px; font-size: 13.500px; line-height: 42px; letter-spacing: -0.4px; }
  .clock { width: 70px; display: flex; flex-direction: column; align-items: center; line-height: 18px; padding-top: 2px; }
  .dt { letter-spacing: -0.4px; }
</style>
